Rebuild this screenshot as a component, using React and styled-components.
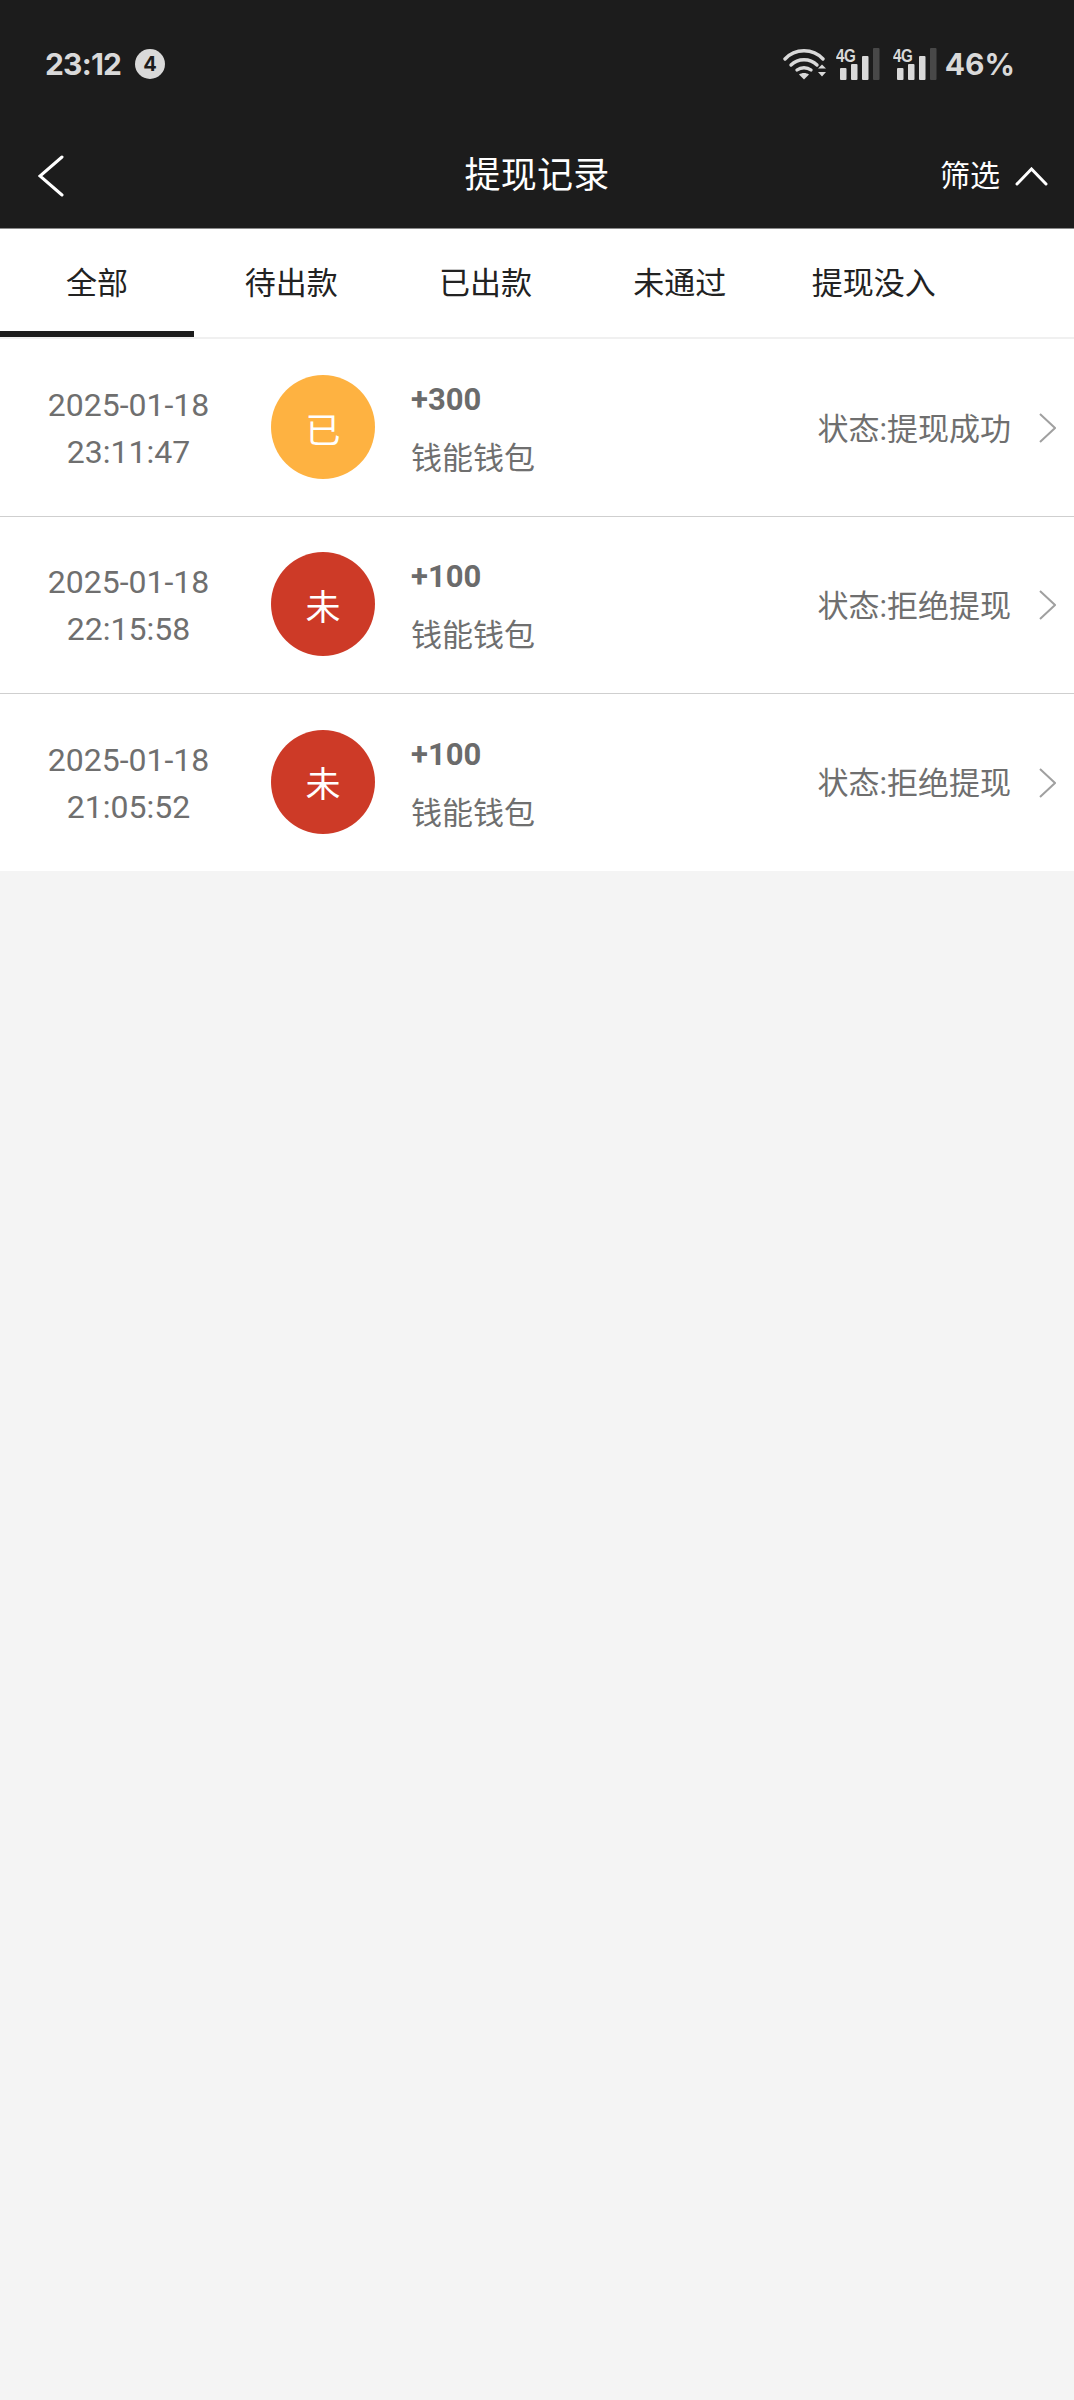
import React from 'react'
import styled, { createGlobalStyle } from 'styled-components'

const GlobalStyle = createGlobalStyle`
  html, body {
    margin: 0;
    padding: 0;
    background: #f4f4f4;
  }
  body {
    font-family: Roboto, "Noto Sans CJK SC", sans-serif;
  }
`

const Page = styled.div`
  width: 1074px;
  min-height: 2400px;
  background: #f4f4f4;
`

const Header = styled.header`
  background: #1c1c1c;
  height: 228px;
  border-bottom: 1px solid #8a8a8a;
`

const StatusBar = styled.div`
  height: 130px;
  padding: 48px 59px 0 45px;
  box-sizing: border-box;
  display: flex;
  justify-content: space-between;
  align-items: flex-start;
  color: #d9d9d9;
`

const StatusLeft = styled.div`
  display: flex;
  align-items: center;
  gap: 14px;
  height: 32px;
`

const Clock = styled.span`
  font-family: Inter, sans-serif;
  font-weight: 700;
  font-size: 30px;
  letter-spacing: -0.8px;
  line-height: 32px;
`

const Badge = styled.span`
  width: 30px;
  height: 30px;
  border-radius: 50%;
  background: #d9d9d9;
  color: #1c1c1c;
  font-family: Inter, sans-serif;
  font-weight: 700;
  font-size: 20px;
  display: flex;
  align-items: center;
  justify-content: center;
`

const StatusRight = styled.div`
  display: flex;
  align-items: flex-end;
  height: 32px;
`

const Signal = styled.div`
  position: relative;
  width: 44px;
  height: 32px;
  margin-left: ${props => props.$gap}px;
`

const SignalLabel = styled.span`
  position: absolute;
  left: 0;
  top: -2px;
  font-family: "Liberation Sans", sans-serif;
  font-weight: 700;
  font-size: 19px;
  line-height: 19px;
  letter-spacing: -0.5px;
  transform: scaleX(0.8);
  transform-origin: left top;
`

const Percent = styled.span`
  font-family: Inter, sans-serif;
  font-weight: 700;
  font-size: 30px;
  line-height: 32px;
  margin-left: 8px;
`

const NavBar = styled.div`
  height: 98px;
  padding: 0 26px 6px 38px;
  display: flex;
  align-items: center;
  justify-content: space-between;
  position: relative;
  color: #fff;
  box-sizing: border-box;
`

const NavTitle = styled.div`
  position: absolute;
  left: 0;
  right: 0;
  text-align: center;
  font-size: 36px;
  line-height: 50px;
  letter-spacing: 0.3px;
  pointer-events: none;
`

const FilterButton = styled.div`
  display: flex;
  align-items: center;
  gap: 15px;
  font-size: 30px;
  line-height: 40px;
`

const Tabs = styled.nav`
  display: flex;
  background: #fff;
  height: 110px;
  box-sizing: border-box;
  border-bottom: 2px solid #f0f0f0;
`

const Tab = styled.div`
  width: 194.2px;
  height: 108px;
  box-sizing: border-box;
  padding-top: 33px;
  text-align: center;
  font-size: 31px;
  line-height: 44px;
  color: #222;
  border-bottom: 6px solid ${props => (props.$active ? '#1c1c1c' : 'transparent')};
`

const List = styled.div`
  background: #fff;
  padding-top: 1px;
`

const Row = styled.div`
  height: 177px;
  box-sizing: border-box;
  display: flex;
  align-items: center;
  padding-right: 18px;
  border-bottom: ${props => (props.$last ? 'none' : '1px solid #cfcfcf')};
`

const DateCol = styled.div`
  width: 257px;
  padding-top: 2px;
  text-align: center;
  font-size: 32px;
  line-height: 47px;
  color: #6f6f6f;
`

const Circle = styled.div`
  width: 104px;
  height: 104px;
  margin: 0 0 2px 14px;
  border-radius: 50%;
  background: ${props => props.$color};
  color: #fff;
  font-size: 35px;
  display: flex;
  align-items: center;
  justify-content: center;
  flex-shrink: 0;
`

const Info = styled.div`
  margin-left: 36px;
  padding-top: 7px;
  flex: 1;
`

const Amount = styled.div`
  font-weight: 700;
  font-size: 31px;
  line-height: 36px;
  color: #6b6b6b;
`

const Wallet = styled.div`
  font-size: 31px;
  line-height: 44px;
  margin-top: 19px;
  color: #6f6f6f;
`

const Status = styled.div`
  font-size: 31px;
  line-height: 44px;
  padding-top: 3px;
  color: #6f6f6f;
  margin-right: 28px;
`

const ArrowRight = () => (
  <svg width="17" height="30" viewBox="0 0 17 30" fill="none" stroke="#a0a0a0" strokeWidth="2">
    <path d="M1 1l15 14L1 29" />
  </svg>
)

const WifiIcon = () => (
  <svg width="43" height="32" viewBox="0 0 43 32" fill="none">
    <g stroke="#d9d9d9" strokeWidth="3.4" strokeLinecap="round">
      <path d="M2 11C12 0 30 0 40 11" />
      <path d="M8 17c7-7 19-7 26 0" />
      <path d="M14 22c4-3 10-3 14 0" />
    </g>
    <path d="M16 26.500c3-2 7-2 10 0l-5 5z" fill="#d9d9d9" />
    <path d="M35 20.500l4-4 4 4zM35 24h8l-4 4.500z" fill="#d9d9d9" />
  </svg>
)

const SignalBars = () => (
  <svg width="44" height="32" viewBox="0 0 44 32" style={{ position: 'absolute', left: 0, top: 0 }}>
    <rect x="4" y="20" width="6.500" height="12" rx="1" fill="#d9d9d9" />
    <rect x="15" y="16" width="6.500" height="16" rx="1" fill="#d9d9d9" />
    <rect x="26" y="8" width="6.500" height="24" rx="1" fill="#d9d9d9" />
    <rect x="37" y="0" width="6.500" height="32" rx="1" fill="#484848" />
  </svg>
)

const records = [
  { date: '2025-01-18', time: '23:11:47', mark: '已', color: '#feb241', amount: '+300', status: '状态:提现成功' },
  { date: '2025-01-18', time: '22:15:58', mark: '未', color: '#cd3a27', amount: '+100', status: '状态:拒绝提现' },
  { date: '2025-01-18', time: '21:05:52', mark: '未', color: '#cd3a27', amount: '+100', status: '状态:拒绝提现' },
]

const tabs = ['全部', '待出款', '已出款', '未通过', '提现没入']

export default function App() {
  return (
    <Page>
      <GlobalStyle />
      <Header>
        <StatusBar>
          <StatusLeft>
            <Clock>23:12</Clock>
            <Badge>4</Badge>
          </StatusLeft>
          <StatusRight>
            <WifiIcon />
            <Signal $gap={10}>
              <SignalBars />
              <SignalLabel>4G</SignalLabel>
            </Signal>
            <Signal $gap={13}>
              <SignalBars />
              <SignalLabel>4G</SignalLabel>
            </Signal>
            <Percent>46%</Percent>
          </StatusRight>
        </StatusBar>
        <NavBar>
          <svg width="26" height="42" viewBox="0 0 26 42" fill="none" stroke="#fff" strokeWidth="3" strokeLinecap="round">
            <path d="M24 2L2 21l22 19" />
          </svg>
          <NavTitle>提现记录</NavTitle>
          <FilterButton>
            筛选
            <svg width="33" height="19" viewBox="0 0 33 19" fill="none" stroke="#fff" strokeWidth="3" strokeLinecap="round">
              <path d="M2 17L16.500 2 31 17" />
            </svg>
          </FilterButton>
        </NavBar>
      </Header>
      <Tabs>
        {tabs.map((t, i) => (
          <Tab key={t} $active={i === 0}>{t}</Tab>
        ))}
      </Tabs>
      <List>
        {records.map((r, i) => (
          <Row key={r.time} $last={i === records.length - 1}>
            <DateCol>
              <div>{r.date}</div>
              <div>{r.time}</div>
            </DateCol>
            <Circle $color={r.color}>{r.mark}</Circle>
            <Info>
              <Amount>{r.amount}</Amount>
              <Wallet>钱能钱包</Wallet>
            </Info>
            <Status>{r.status}</Status>
            <ArrowRight />
          </Row>
        ))}
      </List>
    </Page>
  )
}
